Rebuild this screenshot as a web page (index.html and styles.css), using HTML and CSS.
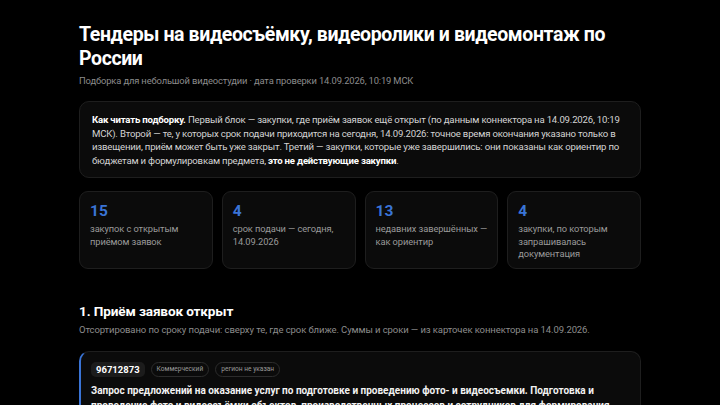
FILE: index.html
```html
<!DOCTYPE html>
<html lang="ru">
<head>
<meta charset="utf-8">
<title>Тендеры на видеосъёмку</title>
<link rel="stylesheet" href="styles.css">
</head>
<body>
<main class="page">
  <h1 class="title">Тендеры на видеосъёмку, видеоролики и видеомонтаж по России</h1>
  <p class="meta">Подборка для небольшой видеостудии · дата проверки 14.09.2026, 10:19 МСК</p>

  <section class="note">
    <p><b>Как читать подборку.</b> Первый блок — закупки, где приём заявок ещё открыт (по данным коннектора на 14.09.2026, 10:19 МСК). Второй — те, у которых срок подачи приходится на сегодня, 14.09.2026: точное время окончания указано только в извещении, приём может быть уже закрыт. Третий — закупки, которые уже завершились: они показаны как ориентир по бюджетам и формулировкам предмета, <b>это не действующие закупки</b>.</p>
  </section>

  <section class="stats">
    <div class="stat"><div class="num">15</div><div class="lbl">закупок с открытым приёмом заявок</div></div>
    <div class="stat"><div class="num">4</div><div class="lbl">срок подачи — сегодня, 14.09.2026</div></div>
    <div class="stat"><div class="num">13</div><div class="lbl">недавних завершённых — как ориентир</div></div>
    <div class="stat"><div class="num">4</div><div class="lbl">закупки, по которым запрашивалась документация</div></div>
  </section>

  <h2 class="section-title">1. Приём заявок открыт</h2>
  <p class="section-sub">Отсортировано по сроку подачи: сверху те, где срок ближе. Суммы и сроки — из карточек коннектора на 14.09.2026.</p>

  <article class="tender">
    <div class="tags">
      <span class="id">96712873</span>
      <span class="pill">Коммерческий</span>
      <span class="pill">регион не указан</span>
    </div>
    <p class="tender-title">Запрос предложений на оказание услуг по подготовке и проведению фото- и видеосъемки. Подготовка и проведение фото и видеосъёмки объектов, производственных процессов и сотрудников для формирования</p>
  </article>
</main>
</body>
</html>
```
FILE: styles.css
```css
* { box-sizing: border-box; }
html, body { margin: 0; padding: 0; background: #000; }
body {
  font-family: Roboto, Inter, "Noto Sans", "Liberation Sans", sans-serif;
  color: #e8e8e8;
}
.page {
  width: 562px;
  margin: 0 auto;
  padding-top: 23px;
}
.title {
  margin: 0;
  font-size: 19.5px;
  line-height: 24px;
  font-weight: 700;
  letter-spacing: -0.02em;
  color: #fff;
}
.meta {
  margin: 3px 0 0;
  font-size: 9.4px;
  line-height: 13px;
  letter-spacing: -0.015em;
  color: #8c8c8c;
}
.note {
  margin-top: 14px;
  background: #0b0b0b;
  border: 1px solid #1e1e1e;
  border-radius: 10px;
  padding: 11px 12px 10px;
}
.note p {
  margin: 0;
  font-size: 9.6px;
  line-height: 13.5px;
  letter-spacing: -0.02em;
  color: #d4d4d4;
}
.note b { color: #fff; font-weight: 700; }
.stats {
  margin-top: 13px;
  display: grid;
  grid-template-columns: repeat(4, 1fr);
  gap: 9px;
}
.stat {
  height: 78px;
  background: #0b0b0b;
  border: 1px solid #1e1e1e;
  border-radius: 9px;
  padding: 10px 10px 8px;
}
.num {
  font-size: 15.5px;
  line-height: 18px;
  font-weight: 700;
  color: #3a74d6;
}
.lbl {
  margin-top: 3px;
  font-size: 9.3px;
  line-height: 12.5px;
  letter-spacing: -0.01em;
  color: #9a9a9a;
}
.section-title {
  margin: 33px 0 0;
  font-size: 13.6px;
  line-height: 18px;
  font-weight: 700;
  color: #fff;
  letter-spacing: -0.01em;
}
.section-sub {
  margin: 3px 0 0;
  font-size: 9.5px;
  line-height: 13px;
  letter-spacing: -0.01em;
  color: #8c8c8c;
}
.tender {
  margin-top: 15px;
  background: #0b0b0b;
  border: 1px solid #1e1e1e;
  border-left: 2px solid #3a74d6;
  border-radius: 10px;
  padding: 10px 10px;
}
.tags {
  display: flex;
  align-items: center;
  gap: 6px;
}
.id {
  background: #1c1c1c;
  border-radius: 5px;
  padding: 2px 5px;
  font-size: 9.5px;
  line-height: 11px;
  font-weight: 700;
  color: #fff;
}
.pill {
  border: 1px solid #2c2c2c;
  border-radius: 999px;
  padding: 2px 5px;
  font-size: 6.6px;
  line-height: 9px;
  color: #9a9a9a;
}
.tender-title {
  margin: 6px 0 0;
  font-size: 10px;
  line-height: 15px;
  font-weight: 700;
  color: #f2f2f2;
}
```
